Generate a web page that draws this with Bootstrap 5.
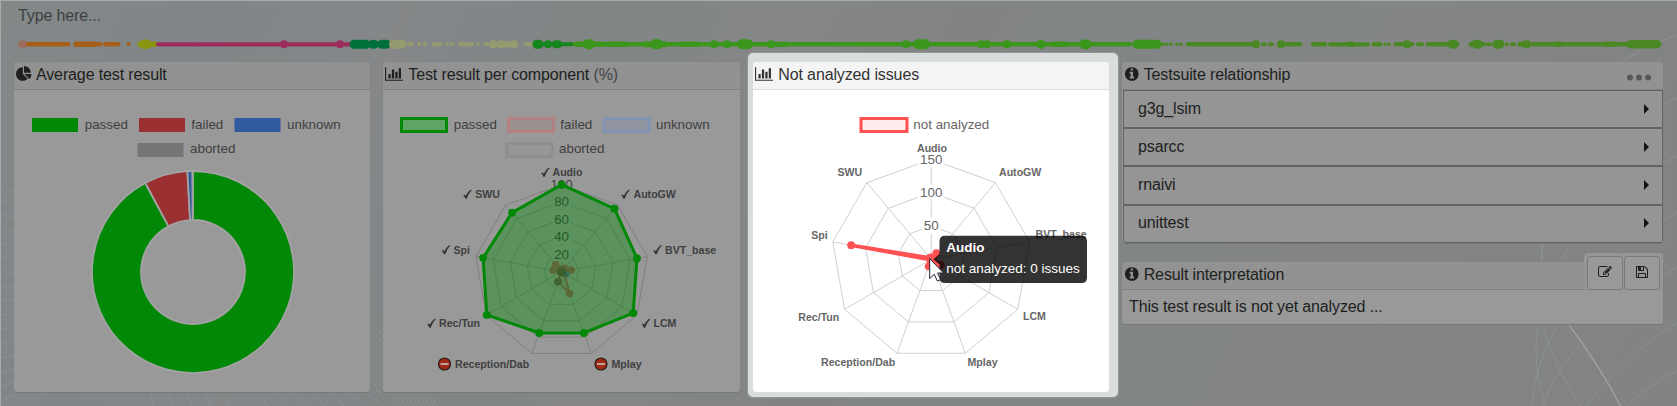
<!DOCTYPE html>
<html lang="en">
<head>
<meta charset="utf-8">
<title>Test result dashboard</title>
<meta name="viewport" content="width=device-width, initial-scale=1">
<link href="https://cdn.jsdelivr.net/npm/bootstrap@5.3.0/dist/css/bootstrap.min.css" rel="stylesheet">
<style>
body{font-family:"Liberation Sans",Arial,sans-serif;font-size:16px;line-height:20px;letter-spacing:-.13px;color:#1d1f20;height:406px;overflow:hidden;
  background:linear-gradient(115deg,#838989 0,#808687 12%,#858789 22%,#808586 31%,#858687 43%,#828483 52%,#818586 64%,#838684 76%,#828383 100%)}
.page-box{height:406px;border-top:1px solid #a7acac;border-left:1px solid #a7acac;padding:0 14px 0 13px;isolation:isolate}
.backdrop{left:0;top:0;z-index:-1}
.filter-text{height:32px;padding:5px 0 0 4px;color:#3c3f40}
.timeline-strip{height:29px}
.timeline-strip svg{display:block;margin-left:-14px;width:1677px;height:29px}
.panels{gap:13px}
.panel{--bs-card-bg:#999;--bs-card-border-width:0;--bs-card-border-radius:3px;--bs-card-inner-border-radius:3px;width:356px;box-shadow:0 1px 1px #757878}
.panel .card-header{background:#929292;border-bottom:1px solid #808282;height:28px;padding:3px 2px 0;color:#1d1f20}
.panel .card-header svg{flex:none;margin-top:1px}
.i-wide{margin-right:5px}
.i-round{margin:0 5px 0 1px}
.chart svg{display:block;letter-spacing:0}
.w-357{width:357px}
.focused{--bs-card-bg:#fff;box-shadow:none}
.focused .card-header{background:#f4f4f4;border-color:#ddd;color:#333}
.focused::before{content:"";position:absolute;z-index:-1;left:-5px;right:-9px;top:-9px;bottom:-5px;border-radius:5px;background:linear-gradient(135deg,#d7dcdd,#dadddd);box-shadow:0 0 1px 1px #959898}
.side{width:541px}
.side .panel{width:100%}
.suites{--bs-list-group-bg:#959595;--bs-list-group-border-color:#636363;--bs-list-group-color:#1d1f20;--bs-list-group-border-radius:0;margin-left:1px}
.suites .list-group-item{height:38.2px;padding:0 13px 1px 14px}
.suites .list-group-item+.list-group-item{border-top-width:1px}
.caret-r{border:5px solid transparent;border-left:5.5px solid #141414;border-right:0}
.mut{color:#444}
.result-card{margin-top:19.2px}
.result-body{height:34px;padding:7px 7px 0}
.tools{right:0;top:-9px;background:#969696;border-radius:4px;padding:3px;gap:1px;height:38px}
.tools .btn{--bs-btn-padding-x:0;--bs-btn-padding-y:0;--bs-btn-border-color:#7a7a7a;--bs-btn-bg:#999;--bs-btn-border-radius:3px;width:36px;height:34px;display:flex;justify-content:center;padding-top:8px}
.lg{font-size:13.4px;fill:#404040}
.pt{font-size:10.6px;font-weight:700;fill:#404040}
.focused .lg,.focused .pt{fill:#666}
</style>
</head>
<body>
<svg width="0" height="0" class="position-absolute" aria-hidden="true">
 <symbol id="i-pie" viewBox="0 0 1792 1792"><path d="M768 890l546 546q-106 108-247.500 168t-298.500 60q-209 0-385.500-103t-279.500-279.500-103-385.500 103-385.500 279.500-279.500 385.500-103v762zm187 6h773q0 157-60 298.500t-168 247.500zm709-128h-768v-768q209 0 385.500 103t279.500 279.500 103 385.500z"/></symbol>
 <symbol id="i-bar" viewBox="0 0 2048 1792"><path d="M640 896v512h-256v-512h256zm384-512v1024h-256v-1024h256zm1024 1152v128h-2048v-1536h128v1408h1920zm-640-896v768h-256v-768h256zm384-384v1152h-256v-1152h256z"/></symbol>
 <symbol id="i-info" viewBox="128 0 1536 1792"><path d="M1152 1376v-160q0-14-9-23t-23-9h-96v-512q0-14-9-23t-23-9h-320q-14 0-23 9t-9 23v160q0 14 9 23t23 9h96v320h-96q-14 0-23 9t-9 23v160q0 14 9 23t23 9h448q14 0 23-9t9-23zm-128-896v-160q0-14-9-23t-23-9h-192q-14 0-23 9t-9 23v160q0 14 9 23t23 9h192q14 0 23-9t9-23zm640 416q0 209-103 385.500t-279.500 279.500-385.500 103-385.500-103-279.500-279.500-103-385.500 103-385.500 279.500-279.500 385.500-103 385.500 103 279.500 279.500 103 385.500z"/></symbol>
 <symbol id="i-edit" viewBox="0 0 1792 1792"><path d="M888 1184l116-116-152-152-116 116v56h96v96h56zm440-720q-16-16-33 1l-350 350q-17 17-1 33t33-1l350-350q17-17 1-33zm80 594v190q0 119-84.500 203.500t-203.500 84.500h-832q-119 0-203.500-84.500t-84.500-203.500v-832q0-119 84.500-203.500t203.500-84.500h832q63 0 117 25 15 7 18 23 3 17-9 29l-49 49q-14 14-32 8-23-6-45-6h-832q-66 0-113 47t-47 113v832q0 66 47 113t113 47h832q66 0 113-47t47-113v-126q0-13 9-22l64-64q15-15 35-7t20 29zm-96-738l288 288-672 672h-288v-288zm444 132l-92 92-288-288 92-92q28-28 68-28t68 28l152 152q28 28 28 68t-28 68z"/></symbol>
 <symbol id="i-save" viewBox="128 0 1536 1792"><path d="M512 1536h768v-384h-768v384zm896 0h128v-896q0-14-10-38.500t-20-34.500l-281-281q-10-10-34-20t-39-10v416q0 40-28 68t-68 28h-576q-40 0-68-28t-28-68v-416h-128v1280h128v-416q0-40 28-68t68-28h832q40 0 68 28t28 68v416zm-384-928v-320q0-13-9.500-22.500t-22.500-9.500h-192q-13 0-22.500 9.500t-9.500 22.500v320q0 13 9.500 22.500t22.500 9.500h192q13 0 22.500-9.500t9.500-22.500zm640 32v928q0 40-28 68t-68 28h-1344q-40 0-68-28t-28-68v-1344q0-40 28-68t68-28h928q40 0 88 20t76 48l280 280q28 28 48 76t20 88z"/></symbol>
 <symbol id="i-check" viewBox="0 0 9 10"><path d="M.6 5.900Q1.900 4.600 2.900 7 4.600 2.900 7.500.6L8.500.7Q5.300 4 3.500 9.200H2.500Q1.800 6.800.6 5.900z" fill="#2b2b2b" stroke="#2b2b2b" stroke-width=".4"/></symbol>
 <symbol id="i-stop" viewBox="0 0 14 14"><circle cx="7" cy="7" r="6" fill="#a52a14" stroke="#2a1a18" stroke-width="1.200"/><path d="M3 7h8" stroke="#b9a29c" stroke-width="2"/></symbol>
</svg>

<div class="page-box position-relative">
 <svg class="backdrop position-absolute" width="1676" height="405" viewBox="1 1 1676 405" fill="none" stroke="#949999" stroke-width="1">
  <g id="fan" stroke-opacity=".5"></g>
  <path d="M1569 325Q1600 366 1621 407" stroke="#a0a2a2" stroke-width="1.300"/>
  <path d="M1677 35Q1645 46 1622 62M1677 98L1663 104M1677 156L1663 163M1677 212L1663 222M1677 266L1663 276" stroke-opacity=".7"/>
  <path d="M1540 243L1543 261M1543 243L1541 261M1572 244L1561 260M1630 244L1618 252M1538 325Q1531 365 1546 407M1557 325Q1533 370 1532 407M1542 325Q1556 370 1581 407M1600 325Q1555 366 1543 407M1677 322Q1630 350 1585 407M1677 371Q1650 384 1626 407" stroke-opacity=".6"/>
 </svg>

 <div class="filter-text">Type here...</div>
 <div class="timeline-strip"><svg id="timeline" viewBox="0 33 1677 29" stroke-linecap="round"></svg></div>

 <div class="panels d-flex align-items-start">
  <section class="card panel">
   <div class="card-header d-flex"><svg width="16" height="16" class="me-1" fill="currentColor"><use href="#i-pie"/></svg><span>Average test result</span></div>
   <div class="chart"><svg width="356" height="302" viewBox="14 90 356 302">
    <g><path d="M32 118h46v14H32z" fill="#008806"/><path d="M139 118h46v14H139z" fill="#9a3031"/><path d="M234.500 118h46v14h-46z" fill="#325a9f"/><path d="M137.500 143h46v14h-46z" fill="#767676"/></g>
    <g class="lg"><text x="84.700" y="129">passed</text><text x="191.300" y="129">failed</text><text x="287" y="129">unknown</text><text x="190" y="153">aborted</text></g>
    <g id="donut" stroke="#a3a3a3" stroke-width="1.800"></g>
   </svg></div>
  </section>

  <section class="card panel w-357">
   <div class="card-header d-flex"><svg width="18.300" height="16" class="i-wide" fill="currentColor"><use href="#i-bar"/></svg><span>Test result per component <span class="mut">(%)</span></span></div>
   <div class="chart"><svg id="radarA" width="357" height="302" viewBox="383 90 357 302">
    <g stroke-width="3"><path d="M401.500 118.500h45v13h-45z" fill="#5fa462" stroke="#008806"/><path d="M508.500 118.500h45v13h-45z" fill="#9c9191" stroke="#b28282"/><path d="M604 118.500h45v13h-45z" fill="#9195a0" stroke="#8393b4"/><path d="M507 143.500h45v13h-45z" fill="#979797" stroke="#8e8e8e"/></g>
    <g class="lg"><text x="453.700" y="129">passed</text><text x="560.300" y="129">failed</text><text x="656" y="129">unknown</text><text x="559" y="153">aborted</text></g>
   </svg></div>
  </section>

  <section class="card panel focused">
   <div class="card-header d-flex"><svg width="18.300" height="16" class="i-wide" fill="currentColor"><use href="#i-bar"/></svg><span>Not analyzed issues</span></div>
   <div class="chart"><svg id="radarB" width="356" height="302" viewBox="753 90 356 302">
    <path d="M861 118.500h46v13h-46z" fill="#ffebeb" stroke="#ff5252" stroke-width="3"/>
    <text class="lg" x="913.300" y="129">not analyzed</text>
   </svg></div>
  </section>

  <div class="side">
   <section class="card panel">
    <div class="card-header d-flex"><svg width="13.700" height="16" class="i-round" fill="currentColor"><use href="#i-info"/></svg><span>Testsuite relationship</span>
     <svg class="ms-auto" width="36" height="24" fill="#555858"><circle cx="5" cy="11.500" r="3"/><circle cx="14" cy="11.500" r="3"/><circle cx="23" cy="11.500" r="3"/></svg></div>
    <div class="list-group suites">
     <div class="list-group-item d-flex align-items-center justify-content-between">g3g_lsim<i class="caret-r"></i></div>
     <div class="list-group-item d-flex align-items-center justify-content-between">psarcc<i class="caret-r"></i></div>
     <div class="list-group-item d-flex align-items-center justify-content-between">rnaivi<i class="caret-r"></i></div>
     <div class="list-group-item d-flex align-items-center justify-content-between">unittest<i class="caret-r"></i></div>
    </div>
   </section>
   <section class="card panel result-card">
    <div class="card-header d-flex"><svg width="13.700" height="16" class="i-round" fill="currentColor"><use href="#i-info"/></svg><span>Result interpretation</span></div>
    <div class="tools position-absolute d-flex">
     <button class="btn" aria-label="Edit"><svg width="14" height="14" fill="#1d1f20"><use href="#i-edit"/></svg></button>
     <button class="btn" aria-label="Save"><svg width="12" height="14" fill="#1d1f20"><use href="#i-save"/></svg></button>
    </div>
    <div class="result-body">This test result is not yet analyzed ...</div>
   </section>
  </div>
 </div>
</div>

<script src="https://cdn.jsdelivr.net/npm/bootstrap@5.3.0/dist/js/bootstrap.bundle.min.js"></script>
<script>
const add=(id,s)=>document.getElementById(id).insertAdjacentHTML('beforeend',s);

// timeline: [colour, [from, to, thickness]...]
const runs=[
 ['#9c6c5c',[20,26,5],[23,23,8]],
 ['#a55e18',[28,68,4.5],[76,94,5.5],[92,100,4.5],[105,118,4.5],[128.5,128.5,4]],
 ['#8a9512',[140,155,5.5],[143,148,8],[145.5,145.5,10]],
 ['#9b2c5b',[158,352,4.2],[284,284,8],[340,340,8]],
 ['#00703a',[354,366,9],[364,390,6],[373,374,9],[382,386,9]],
 ['#959b6f',[393.5,402,9],[409,412,4],[419,419,4],[425,425,4],[434,440,4],[447,447,4],[452,452,4],[460,472,4],[478,478,4],[485,487,4],[493,493,8],[501,501,8],[507,507,7],[514,514,8],[496,510,6],[526,533,4]],
 ['#15861c',[537,539,9],[548,548,8],[556,558,8],[538,572,4]],
 ['#3b971b',[575,1130,4.6],[577,603,5.5],[588,590,10],[608,625,5.5],[645,665,6],[655,658,10],[682,697,5.500],[714,714,8],[727,727,8],[742,748,10],[771,771,8],[775,787,5.2],[906,906,8],[918,925,10],[981,981,8],[987,987,8],[1007,1007,8.5],[1041,1041,9],[1053,1065,5.5],[1084,1087,9.5],[1137,1157,9]],
 ['#4a8823',[1163,1163,4],[1167,1167,3.500],[1171,1171,3.500],[1177,1177,3.500],[1181,1181,3.500],[1188,1257,4.4],[1256,1256,8],[1263,1265,4],[1270,1272,4],[1281,1281,8],[1284,1300,4.500],[1313,1325,4.500],[1330,1368,4.200],[1349,1352,5.5],[1374,1380,4.500],[1385,1385,3.500],[1389,1389,3.500],[1396,1412,4.500],[1407,1407,8],[1418,1422,4],[1428,1457,4.600],[1452,1454,9],[1471,1483,5],[1476,1478,9],[1487,1491,3.500],[1497,1500,9],[1507,1507,4],[1512,1514,4],[1520,1526,5],[1526,1527,8],[1533,1628,4.600],[1555,1560,5.500],[1606,1614,5.500],[1631,1657,8.5]]];
add('timeline',runs.map(([c,...r])=>`<g stroke="${c}">`+r.map(([a,b,w])=>`<path d="M${a} 44.300H${b+.01}" stroke-width="${w}"/>`).join('')+'</g>').join(''));

// radiating hairlines behind the panels
let f='';
for(let i=0;i<17;i++){const y=170+i*14.500;f+=`<path d="M0 ${y}L14 ${y+8-i*.9}"/>`;}
for(let i=0;i<9;i++)f+=`<path d="M${2+i*4} 406L${12+i*4.500} ${392}"/>`;
for(let i=0;i<13;i++)f+=`<path d="M${150+i*18} 392L${154+i*19} 406"/>`;
for(let i=0;i<9;i++)f+=`<path d="M370 ${322+i*7}L384 ${336+i*8}"/>`;
for(let i=0;i<11;i++)f+=`<path d="M${390+i*4} 392L${397+i*4} 406"/>`;
add('fan',f);

// doughnut
const P=(cx,cy,r,d)=>{const a=d*Math.PI/180;return[(cx+r*Math.sin(a)).toFixed(2),(cy-r*Math.cos(a)).toFixed(2)]};
add('donut',[[0,331.800,'#008806'],[331.800,356.800,'#9a3031'],[356.800,359.600,'#325a9f']].map(([a,b,c])=>{
 const L=b-a>180?1:0;
 return `<path fill="${c}" d="M${P(193,272,101,a)}A101 101 0 ${L} 1 ${P(193,272,101,b)}L${P(193,272,52,b)}A52 52 0 ${L} 0 ${P(193,272,52,a)}Z"/>`}).join(''));

// radar charts with nine axes
const ring=(cx,cy,rs)=>rs.map((r,i)=>P(cx,cy,r,i*40));
const grid=(cx,cy,R,n,c)=>{let s=`<g fill="none" stroke="${c}">`;
 for(let k=1;k<=n;k++)s+=`<polygon points="${ring(cx,cy,Array(9).fill(R*k/n)).join(' ')}"/>`;
 for(let i=0;i<9;i++)s+=`<path d="M${cx} ${cy}L${P(cx,cy,R,i*40)}"/>`;return s+'</g>'};
const series=(cx,cy,R,v,st,fi,w,o=1)=>{const p=ring(cx,cy,v.map(x=>x*R));
 return `<g opacity="${o}"><polygon points="${p.join(' ')}" fill="${fi}" stroke="${st}" stroke-width="${w}"/>`+p.map(q=>`<circle cx="${q[0]}" cy="${q[1]}" r="3.900" fill="${st}"/>`).join('')+'</g>'};
const ticks=(cx,list,bg)=>list.map(([y,t])=>`<rect x="${cx-t.length*3.7-2}" y="${y-8}" width="${t.length*7.400+4}" height="16" fill="${bg}"/><text class="lg" x="${cx}" y="${y+4.800}" text-anchor="middle">${t}</text>`).join('');

const ax=561.600,ay=271.700;
add('radarA',
 grid(ax,ay,87,5,'#808080')+
 ticks(ax,[[184,'100'],[201.500,'80'],[219,'60'],[236,'40'],[254,'20']],'#999')+
 series(ax,ay,87,[.03,.05,.11,.04,.265,.12,.01,.096,.105],'#9a3031','#9a303133',2,.6)+
 `<circle cx="566.500" cy="274.500" r="3" fill="#325a9f" opacity=".5"/><circle cx="558" cy="281.700" r="3.800" fill="#444" opacity=".5"/><circle cx="561.600" cy="271.700" r="4.500" fill="#333" opacity=".5"/>`+
 series(ax,ay,87,[1,.945,.88,.95,.75,.75,.993,.916,.886],'#008806','#00880666',3)+
 [[541,'Audio',552.500,176],[621,'AutoGW',633.500,198],[653,'BVT_base',665,253.500],[641.500,'LCM',653.500,327],[594,'Mplay',611.500,368],[437.500,'Reception/Dab',455,368],[427,'Rec/Tun',439,327],[441.500,'Spi',453.500,253.500],[463,'SWU',475.300,198]].map(([ix,t,x,y])=>
  (/Mplay|Dab/.test(t)?`<use href="#i-stop" x="${ix}" y="${y-11}" width="14" height="14"/>`:`<use href="#i-check" x="${ix}" y="${y-8.700}" width="9" height="10"/>`)+`<text class="pt" x="${x}" y="${y}">${t}</text>`).join(''));

const bx=931.200,by=259.300;
add('radarB',
 grid(bx,by,100,3,'#d0d0d0')+
 ticks(bx,[[159.300,'150'],[192.500,'100'],[225.600,'50']],'#fff')+
 series(bx,by,100,[.02,.08,.02,.11,.02,.075,.01,.813,.02],'#ff5252','#ff525222',3.500)+
 [['Audio',917,152],['AutoGW',999,176],['BVT_base',1035.500,238],['LCM',1023,320],['Mplay',967.500,366],['Reception/Dab',821,366],['Rec/Tun',798.300,321],['Spi',811.300,238.500],['SWU',837.500,176]].map(([t,x,y])=>`<text class="pt" x="${x}" y="${y}">${t}</text>`).join('')+
 `<g opacity=".8"><path d="M945 235.700H1081.500Q1087 235.700 1087 241.500V277.500Q1087 283 1081.500 283H945Q939.500 283 939.500 277.500V264.500L933.500 259.300L939.500 254V241.500Q939.500 235.700 945 235.700Z"/></g>
 <g fill="#fff" font-size="13.500"><text x="946.200" y="252.300" font-weight="700">Audio</text><text x="946.200" y="273">not analyzed: 0 issues</text></g>
 <path d="M929.700 258.500V278.500L934.300 274.300L937.300 281L940.500 279.600L937.600 273H943.500Z" fill="#fff" stroke="#223" stroke-width="1"/>`);
</script>
</body>
</html>
